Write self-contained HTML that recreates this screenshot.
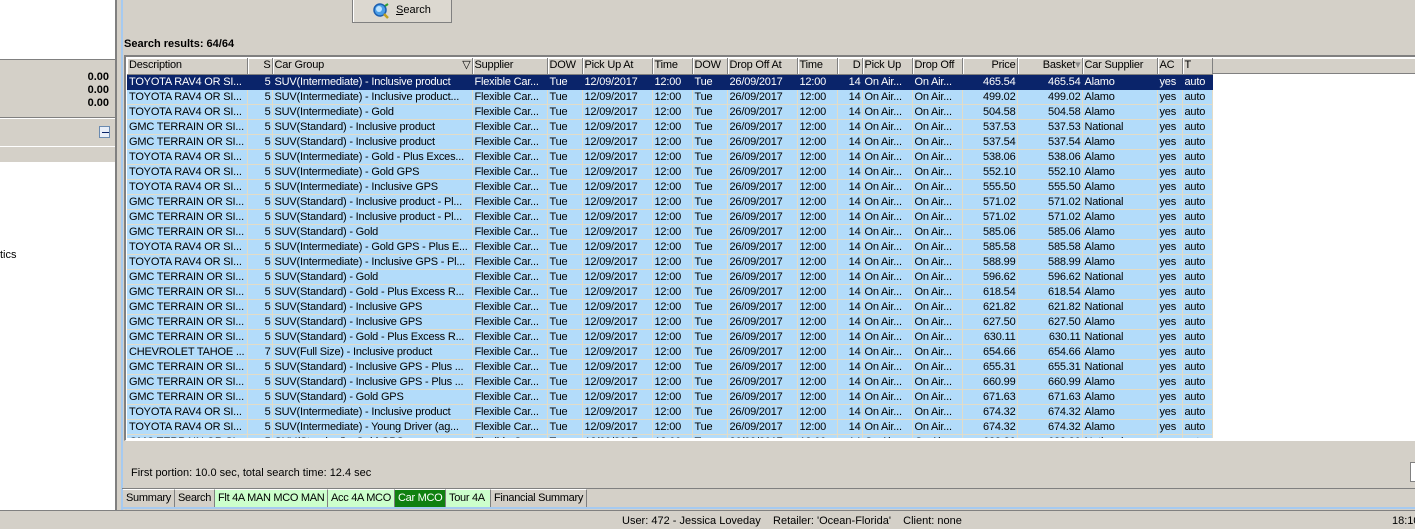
<!DOCTYPE html>
<html><head><meta charset="utf-8"><style>
*{margin:0;padding:0;box-sizing:border-box}
body{width:1415px;height:529px;background:#d4d0c8;font-family:"Liberation Sans",sans-serif;font-size:11px;color:#000;position:relative;overflow:hidden}
.a{position:absolute}
table{border-collapse:collapse;table-layout:fixed;position:absolute;left:0;top:0;width:1085px}
td{height:15px;padding:0 1px 0 2px;white-space:nowrap;overflow:hidden;border-right:1px solid #e2dcc8;border-bottom:1px solid #e2dcc8;background:#b3dcfa;line-height:14px;letter-spacing:-0.2px}
th{height:16px;font-weight:normal;text-align:left;padding:0 1px 0 2px;background:#d4d0c8;border-right:1px solid #808080;border-bottom:1px solid #808080;box-shadow:inset 1px 1px 0 #fff;white-space:nowrap;overflow:hidden;line-height:15px;letter-spacing:-0.2px}
.r{text-align:right}
tr.sel td{background:#0a246a;color:#fff;border-color:#0a246a}
.tab{position:absolute;top:489px;height:18px;line-height:17px;padding-left:3px;border-right:1px solid #808080;border-top:1px solid #fff;white-space:nowrap;overflow:hidden;letter-spacing:-0.3px}
</style></head><body>
<!-- left panel -->
<div class="a" style="left:0;top:0;width:116px;height:60px;background:#fff;border-bottom:1px solid #808080"></div>
<div class="a" style="left:0;top:71px;width:109px;text-align:right;font-weight:bold;line-height:13px">0.00<br>0.00<br>0.00</div>
<div class="a" style="left:0;top:117px;width:116px;height:2px;border-top:1px solid #808080;border-bottom:1px solid #fff"></div>
<div class="a" style="left:0;top:121px;width:116px;height:26px;border-bottom:1px solid #fff"></div>
<div class="a" style="left:99px;top:126px;width:11px;height:12px;border:1px solid #6a8ab0;background:#e8eef8"></div>
<div class="a" style="left:102px;top:132px;width:7px;height:1px;background:#0a246a"></div>
<div class="a" style="left:0;top:162px;width:116px;height:348px;background:#fff"></div>
<div class="a" style="left:0;top:249px">tics</div>
<div class="a" style="left:115px;top:0;width:2px;height:510px;background:#808080"></div>
<div class="a" style="left:121px;top:0;width:2px;height:510px;background:#a6caf0"></div>
<!-- search button -->
<div class="a" style="left:352px;top:-2px;width:100px;height:25px;border:1px solid #808080;background:#dcd8d0;box-shadow:inset 1px 1px 0 #fff"></div>
<svg class="a" style="left:372px;top:2px" width="18" height="18" viewBox="0 0 18 18"><circle cx="8" cy="8" r="6" fill="#4a9ee8" stroke="#1d5fb0" stroke-width="1.5"/><circle cx="7" cy="7" r="3" fill="#bfe4ff"/><path d="M12 12l4 4" stroke="#c0a020" stroke-width="2.5"/><path d="M13 4l3-2" stroke="#30a030" stroke-width="2"/></svg>
<div class="a" style="left:396px;top:4px"><u>S</u>earch</div>
<div class="a" style="left:124px;top:38px;font-weight:bold">Search results: 64/64</div>
<!-- grid frame -->
<div class="a" style="left:124px;top:55px;width:1291px;height:386px;border-top:2px solid #808080;border-left:2px solid #808080;background:#fff;border-bottom:1px solid #fff"></div>
<div class="a" style="left:1212px;top:58px;width:203px;height:16px;background:#d4d0c8;box-shadow:inset 1px 1px 0 #fff;border-bottom:1px solid #808080"></div>
<div class="a" style="left:127px;top:58px;width:1288px;height:380px;overflow:hidden">
<table>
<colgroup><col style="width:120px"><col style="width:25px"><col style="width:200px"><col style="width:75px"><col style="width:35px"><col style="width:70px"><col style="width:40px"><col style="width:35px"><col style="width:70px"><col style="width:40px"><col style="width:25px"><col style="width:50px"><col style="width:50px"><col style="width:55px"><col style="width:65px"><col style="width:75px"><col style="width:25px"><col style="width:30px"></colgroup>
<tr><th>Description</th><th class=r>S</th><th>Car Group<span style="float:right">▽</span></th><th>Supplier</th><th>DOW</th><th>Pick Up At</th><th>Time</th><th>DOW</th><th>Drop Off At</th><th>Time</th><th class=r>D</th><th>Pick Up</th><th>Drop Off</th><th class=r>Price</th><th class=r>Basket<span style="color:#888">▾</span></th><th>Car Supplier</th><th>AC</th><th>T</th></tr>
<tr class=sel><td>TOYOTA RAV4 OR SI...</td><td class=r>5</td><td>SUV(Intermediate) - Inclusive product</td><td>Flexible Car...</td><td>Tue</td><td>12/09/2017</td><td>12:00</td><td>Tue</td><td>26/09/2017</td><td>12:00</td><td class=r>14</td><td>On Air...</td><td>On Air...</td><td class=r>465.54</td><td class=r>465.54</td><td>Alamo</td><td>yes</td><td>auto</td></tr>
<tr><td>TOYOTA RAV4 OR SI...</td><td class=r>5</td><td>SUV(Intermediate) - Inclusive product...</td><td>Flexible Car...</td><td>Tue</td><td>12/09/2017</td><td>12:00</td><td>Tue</td><td>26/09/2017</td><td>12:00</td><td class=r>14</td><td>On Air...</td><td>On Air...</td><td class=r>499.02</td><td class=r>499.02</td><td>Alamo</td><td>yes</td><td>auto</td></tr>
<tr><td>TOYOTA RAV4 OR SI...</td><td class=r>5</td><td>SUV(Intermediate) - Gold</td><td>Flexible Car...</td><td>Tue</td><td>12/09/2017</td><td>12:00</td><td>Tue</td><td>26/09/2017</td><td>12:00</td><td class=r>14</td><td>On Air...</td><td>On Air...</td><td class=r>504.58</td><td class=r>504.58</td><td>Alamo</td><td>yes</td><td>auto</td></tr>
<tr><td>GMC TERRAIN OR SI...</td><td class=r>5</td><td>SUV(Standard) - Inclusive product</td><td>Flexible Car...</td><td>Tue</td><td>12/09/2017</td><td>12:00</td><td>Tue</td><td>26/09/2017</td><td>12:00</td><td class=r>14</td><td>On Air...</td><td>On Air...</td><td class=r>537.53</td><td class=r>537.53</td><td>National</td><td>yes</td><td>auto</td></tr>
<tr><td>GMC TERRAIN OR SI...</td><td class=r>5</td><td>SUV(Standard) - Inclusive product</td><td>Flexible Car...</td><td>Tue</td><td>12/09/2017</td><td>12:00</td><td>Tue</td><td>26/09/2017</td><td>12:00</td><td class=r>14</td><td>On Air...</td><td>On Air...</td><td class=r>537.54</td><td class=r>537.54</td><td>Alamo</td><td>yes</td><td>auto</td></tr>
<tr><td>TOYOTA RAV4 OR SI...</td><td class=r>5</td><td>SUV(Intermediate) - Gold - Plus Exces...</td><td>Flexible Car...</td><td>Tue</td><td>12/09/2017</td><td>12:00</td><td>Tue</td><td>26/09/2017</td><td>12:00</td><td class=r>14</td><td>On Air...</td><td>On Air...</td><td class=r>538.06</td><td class=r>538.06</td><td>Alamo</td><td>yes</td><td>auto</td></tr>
<tr><td>TOYOTA RAV4 OR SI...</td><td class=r>5</td><td>SUV(Intermediate) - Gold GPS</td><td>Flexible Car...</td><td>Tue</td><td>12/09/2017</td><td>12:00</td><td>Tue</td><td>26/09/2017</td><td>12:00</td><td class=r>14</td><td>On Air...</td><td>On Air...</td><td class=r>552.10</td><td class=r>552.10</td><td>Alamo</td><td>yes</td><td>auto</td></tr>
<tr><td>TOYOTA RAV4 OR SI...</td><td class=r>5</td><td>SUV(Intermediate) - Inclusive GPS</td><td>Flexible Car...</td><td>Tue</td><td>12/09/2017</td><td>12:00</td><td>Tue</td><td>26/09/2017</td><td>12:00</td><td class=r>14</td><td>On Air...</td><td>On Air...</td><td class=r>555.50</td><td class=r>555.50</td><td>Alamo</td><td>yes</td><td>auto</td></tr>
<tr><td>GMC TERRAIN OR SI...</td><td class=r>5</td><td>SUV(Standard) - Inclusive product - Pl...</td><td>Flexible Car...</td><td>Tue</td><td>12/09/2017</td><td>12:00</td><td>Tue</td><td>26/09/2017</td><td>12:00</td><td class=r>14</td><td>On Air...</td><td>On Air...</td><td class=r>571.02</td><td class=r>571.02</td><td>National</td><td>yes</td><td>auto</td></tr>
<tr><td>GMC TERRAIN OR SI...</td><td class=r>5</td><td>SUV(Standard) - Inclusive product - Pl...</td><td>Flexible Car...</td><td>Tue</td><td>12/09/2017</td><td>12:00</td><td>Tue</td><td>26/09/2017</td><td>12:00</td><td class=r>14</td><td>On Air...</td><td>On Air...</td><td class=r>571.02</td><td class=r>571.02</td><td>Alamo</td><td>yes</td><td>auto</td></tr>
<tr><td>GMC TERRAIN OR SI...</td><td class=r>5</td><td>SUV(Standard) - Gold</td><td>Flexible Car...</td><td>Tue</td><td>12/09/2017</td><td>12:00</td><td>Tue</td><td>26/09/2017</td><td>12:00</td><td class=r>14</td><td>On Air...</td><td>On Air...</td><td class=r>585.06</td><td class=r>585.06</td><td>Alamo</td><td>yes</td><td>auto</td></tr>
<tr><td>TOYOTA RAV4 OR SI...</td><td class=r>5</td><td>SUV(Intermediate) - Gold GPS - Plus E...</td><td>Flexible Car...</td><td>Tue</td><td>12/09/2017</td><td>12:00</td><td>Tue</td><td>26/09/2017</td><td>12:00</td><td class=r>14</td><td>On Air...</td><td>On Air...</td><td class=r>585.58</td><td class=r>585.58</td><td>Alamo</td><td>yes</td><td>auto</td></tr>
<tr><td>TOYOTA RAV4 OR SI...</td><td class=r>5</td><td>SUV(Intermediate) - Inclusive GPS - Pl...</td><td>Flexible Car...</td><td>Tue</td><td>12/09/2017</td><td>12:00</td><td>Tue</td><td>26/09/2017</td><td>12:00</td><td class=r>14</td><td>On Air...</td><td>On Air...</td><td class=r>588.99</td><td class=r>588.99</td><td>Alamo</td><td>yes</td><td>auto</td></tr>
<tr><td>GMC TERRAIN OR SI...</td><td class=r>5</td><td>SUV(Standard) - Gold</td><td>Flexible Car...</td><td>Tue</td><td>12/09/2017</td><td>12:00</td><td>Tue</td><td>26/09/2017</td><td>12:00</td><td class=r>14</td><td>On Air...</td><td>On Air...</td><td class=r>596.62</td><td class=r>596.62</td><td>National</td><td>yes</td><td>auto</td></tr>
<tr><td>GMC TERRAIN OR SI...</td><td class=r>5</td><td>SUV(Standard) - Gold - Plus Excess R...</td><td>Flexible Car...</td><td>Tue</td><td>12/09/2017</td><td>12:00</td><td>Tue</td><td>26/09/2017</td><td>12:00</td><td class=r>14</td><td>On Air...</td><td>On Air...</td><td class=r>618.54</td><td class=r>618.54</td><td>Alamo</td><td>yes</td><td>auto</td></tr>
<tr><td>GMC TERRAIN OR SI...</td><td class=r>5</td><td>SUV(Standard) - Inclusive GPS</td><td>Flexible Car...</td><td>Tue</td><td>12/09/2017</td><td>12:00</td><td>Tue</td><td>26/09/2017</td><td>12:00</td><td class=r>14</td><td>On Air...</td><td>On Air...</td><td class=r>621.82</td><td class=r>621.82</td><td>National</td><td>yes</td><td>auto</td></tr>
<tr><td>GMC TERRAIN OR SI...</td><td class=r>5</td><td>SUV(Standard) - Inclusive GPS</td><td>Flexible Car...</td><td>Tue</td><td>12/09/2017</td><td>12:00</td><td>Tue</td><td>26/09/2017</td><td>12:00</td><td class=r>14</td><td>On Air...</td><td>On Air...</td><td class=r>627.50</td><td class=r>627.50</td><td>Alamo</td><td>yes</td><td>auto</td></tr>
<tr><td>GMC TERRAIN OR SI...</td><td class=r>5</td><td>SUV(Standard) - Gold - Plus Excess R...</td><td>Flexible Car...</td><td>Tue</td><td>12/09/2017</td><td>12:00</td><td>Tue</td><td>26/09/2017</td><td>12:00</td><td class=r>14</td><td>On Air...</td><td>On Air...</td><td class=r>630.11</td><td class=r>630.11</td><td>National</td><td>yes</td><td>auto</td></tr>
<tr><td>CHEVROLET TAHOE ...</td><td class=r>7</td><td>SUV(Full Size) - Inclusive product</td><td>Flexible Car...</td><td>Tue</td><td>12/09/2017</td><td>12:00</td><td>Tue</td><td>26/09/2017</td><td>12:00</td><td class=r>14</td><td>On Air...</td><td>On Air...</td><td class=r>654.66</td><td class=r>654.66</td><td>Alamo</td><td>yes</td><td>auto</td></tr>
<tr><td>GMC TERRAIN OR SI...</td><td class=r>5</td><td>SUV(Standard) - Inclusive GPS - Plus ...</td><td>Flexible Car...</td><td>Tue</td><td>12/09/2017</td><td>12:00</td><td>Tue</td><td>26/09/2017</td><td>12:00</td><td class=r>14</td><td>On Air...</td><td>On Air...</td><td class=r>655.31</td><td class=r>655.31</td><td>National</td><td>yes</td><td>auto</td></tr>
<tr><td>GMC TERRAIN OR SI...</td><td class=r>5</td><td>SUV(Standard) - Inclusive GPS - Plus ...</td><td>Flexible Car...</td><td>Tue</td><td>12/09/2017</td><td>12:00</td><td>Tue</td><td>26/09/2017</td><td>12:00</td><td class=r>14</td><td>On Air...</td><td>On Air...</td><td class=r>660.99</td><td class=r>660.99</td><td>Alamo</td><td>yes</td><td>auto</td></tr>
<tr><td>GMC TERRAIN OR SI...</td><td class=r>5</td><td>SUV(Standard) - Gold GPS</td><td>Flexible Car...</td><td>Tue</td><td>12/09/2017</td><td>12:00</td><td>Tue</td><td>26/09/2017</td><td>12:00</td><td class=r>14</td><td>On Air...</td><td>On Air...</td><td class=r>671.63</td><td class=r>671.63</td><td>Alamo</td><td>yes</td><td>auto</td></tr>
<tr><td>TOYOTA RAV4 OR SI...</td><td class=r>5</td><td>SUV(Intermediate) - Inclusive product</td><td>Flexible Car...</td><td>Tue</td><td>12/09/2017</td><td>12:00</td><td>Tue</td><td>26/09/2017</td><td>12:00</td><td class=r>14</td><td>On Air...</td><td>On Air...</td><td class=r>674.32</td><td class=r>674.32</td><td>Alamo</td><td>yes</td><td>auto</td></tr>
<tr><td>TOYOTA RAV4 OR SI...</td><td class=r>5</td><td>SUV(Intermediate) - Young Driver (ag...</td><td>Flexible Car...</td><td>Tue</td><td>12/09/2017</td><td>12:00</td><td>Tue</td><td>26/09/2017</td><td>12:00</td><td class=r>14</td><td>On Air...</td><td>On Air...</td><td class=r>674.32</td><td class=r>674.32</td><td>Alamo</td><td>yes</td><td>auto</td></tr>
<tr><td>GMC TERRAIN OR SI...</td><td class=r>5</td><td>SUV(Standard) - Gold GPS</td><td>Flexible Car...</td><td>Tue</td><td>12/09/2017</td><td>12:00</td><td>Tue</td><td>26/09/2017</td><td>12:00</td><td class=r>14</td><td>On Air...</td><td>On Air...</td><td class=r>683.20</td><td class=r>683.20</td><td>National</td><td>yes</td><td>auto</td></tr>
</table>
</div>
<div class="a" style="left:131px;top:467px">First portion: 10.0 sec, total search time: 12.4 sec</div>
<div class="a" style="left:1410px;top:462px;width:5px;height:20px;border:1px solid #808080;border-right:none;background:#fff"></div>
<div class="a" style="left:122px;top:488px;width:1293px;height:1px;background:#808080"></div>
<div class="tab" style="left:123px;width:52px">Summary</div>
<div class="tab" style="left:175px;width:40px">Search</div>
<div class="tab" style="left:215px;width:113px;background:#ccffcc">Flt 4A MAN MCO MAN</div>
<div class="tab" style="left:328px;width:67px;background:#ccffcc">Acc 4A MCO</div>
<div class="tab" style="left:395px;width:51px;background:#108010;color:#fff">Car MCO</div>
<div class="tab" style="left:446px;width:45px;background:#ccffcc">Tour 4A</div>
<div class="tab" style="left:491px;width:96px">Financial Summary</div>
<div class="a" style="left:122px;top:507px;width:1293px;height:2px;background:#a6caf0"></div>
<div class="a" style="left:0;top:510px;width:1415px;height:1px;background:#808080"></div>
<div class="a" style="left:622px;top:515px">User: 472 - Jessica Loveday &nbsp;&nbsp; Retailer: 'Ocean-Florida' &nbsp;&nbsp; Client: none</div>
<div class="a" style="left:1392px;top:515px">18:10</div>
</body></html>
